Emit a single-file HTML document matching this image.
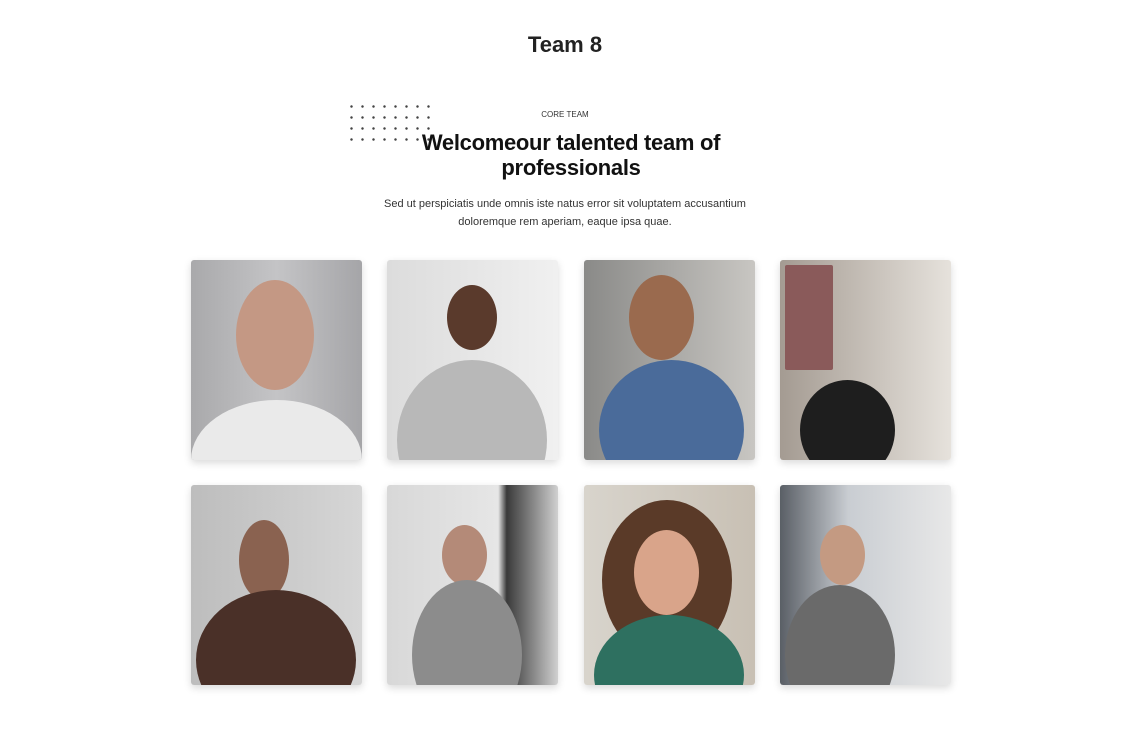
<!DOCTYPE html>
<html><head><style>
body{margin:0;width:1130px;height:730px;background:#fff;font-family:"Liberation Sans",sans-serif;position:relative;overflow:hidden}
h1{position:absolute;top:32px;left:0;width:1130px;text-align:center;margin:0;font-size:22px;color:#222;font-weight:bold}
.dots{position:absolute;left:350px;top:105px;width:88px;height:44px;background-image:radial-gradient(circle,#444 1.1px,transparent 1.4px);background-size:11px 11px;background-position:-4px -4px}
.sub{position:absolute;top:110px;width:1130px;text-align:center;font-size:8px;color:#333}
h2{position:absolute;top:130px;left:365px;width:412px;text-align:center;margin:0;font-size:22px;line-height:25px;color:#111;font-weight:bold;letter-spacing:-0.3px}
p{position:absolute;top:195px;left:376px;width:378px;text-align:center;margin:0;font-size:11px;line-height:18px;color:#333}
.c{position:absolute;width:171px;height:200px;border-radius:3px;box-shadow:0 3px 8px rgba(0,0,0,.15);overflow:hidden}
.c i{position:absolute;border-radius:50%}
</style></head><body>
<h1>Team 8</h1>
<div class="dots"></div>
<div class="sub">CORE TEAM</div>
<h2>Welcomeour talented team of professionals</h2>
<p>Sed ut perspiciatis unde omnis iste natus error sit voluptatem accusantium doloremque rem aperiam, eaque ipsa quae.</p>

<div class="c" style="left:191px;top:260px;background:linear-gradient(90deg,#a9a9ab,#c4c4c6 50%,#a5a5a8)"><i style="left:45px;top:20px;width:78px;height:110px;background:#c49884"></i><i style="left:0;top:140px;width:171px;height:120px;background:#eaeaea"></i></div>
<div class="c" style="left:387px;top:260px;background:linear-gradient(90deg,#dcdcdc,#f0f0f0)"><i style="left:60px;top:25px;width:50px;height:65px;background:#5a3a2c"></i><i style="left:10px;top:100px;width:150px;height:160px;background:#b8b8b8"></i></div>
<div class="c" style="left:584px;top:260px;background:linear-gradient(90deg,#8a8a88,#c8c6c2)"><i style="left:45px;top:15px;width:65px;height:85px;background:#9a6a4e"></i><i style="left:15px;top:100px;width:145px;height:140px;background:#4a6b9a"></i></div>
<div class="c" style="left:780px;top:260px;background:linear-gradient(90deg,#a49b92,#e6e2dc)"><i style="left:5px;top:5px;width:48px;height:105px;border-radius:2px;background:#8a5a5a"></i><i style="left:20px;top:120px;width:95px;height:100px;background:#1e1e1e"></i></div>

<div class="c" style="left:191px;top:485px;background:linear-gradient(90deg,#bdbdbd,#d6d6d6)"><i style="left:48px;top:35px;width:50px;height:80px;background:#8a6250"></i><i style="left:5px;top:105px;width:160px;height:140px;background:#4a3028"></i></div>
<div class="c" style="left:387px;top:485px;background:linear-gradient(90deg,#d8d8d8,#e6e6e6 65%,#3a3a3a 70%,#d0d0d0)"><i style="left:55px;top:40px;width:45px;height:60px;background:#b48a78"></i><i style="left:25px;top:95px;width:110px;height:150px;background:#8c8c8c"></i></div>
<div class="c" style="left:584px;top:485px;background:linear-gradient(90deg,#d8d4cc,#c8c0b4)"><i style="left:18px;top:15px;width:130px;height:160px;background:#5a3a28"></i><i style="left:50px;top:45px;width:65px;height:85px;background:#d9a48a"></i><i style="left:10px;top:130px;width:150px;height:120px;background:#2e7060"></i></div>
<div class="c" style="left:780px;top:485px;background:linear-gradient(90deg,#5a5f66,#c9cdd2 40%,#e8e8e8)"><i style="left:40px;top:40px;width:45px;height:60px;background:#c49a82"></i><i style="left:5px;top:100px;width:110px;height:140px;background:#6a6a6a"></i></div>
</body></html>
